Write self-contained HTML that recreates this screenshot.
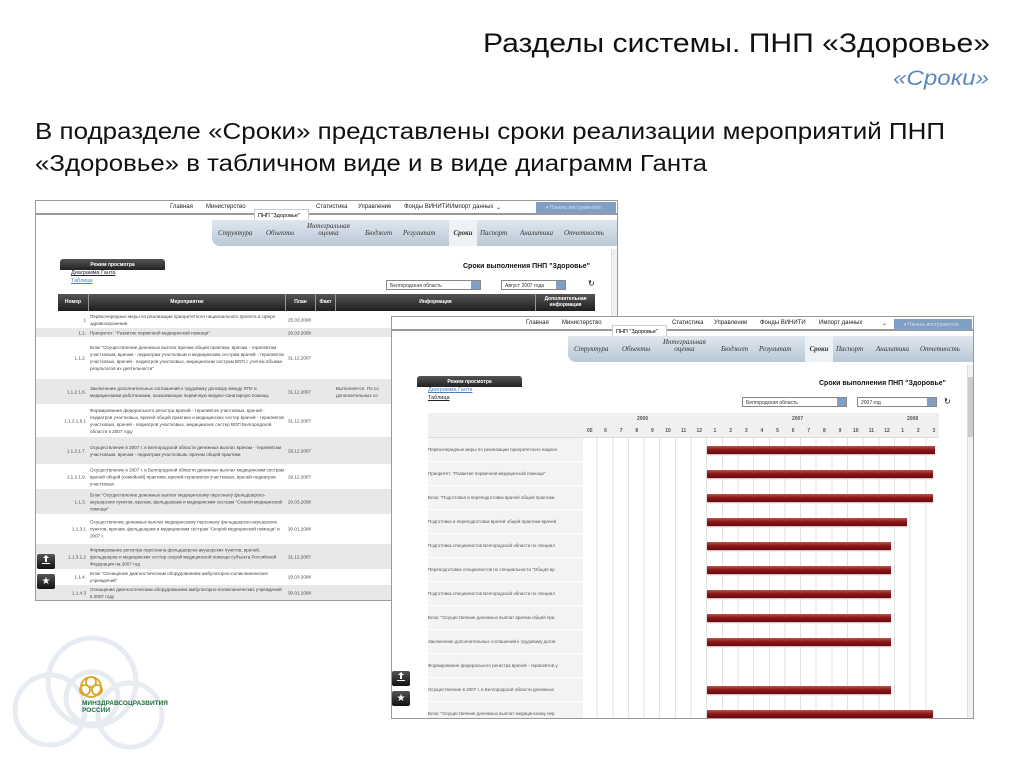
<!DOCTYPE html>
<html><head><meta charset="utf-8"><style>
*{margin:0;padding:0;box-sizing:border-box}
body{width:1024px;height:768px;background:#fff;position:relative;overflow:hidden;font-family:"Liberation Sans","DejaVu Sans",sans-serif}
.a{position:absolute}
.shot{position:absolute;background:#fff;border:1px solid #9a9a9a;overflow:hidden}
.top{position:absolute;left:0;top:0;right:0;height:14px;border-bottom:2px solid #9a9a9a;font-size:6px;color:#222}
.top span{position:absolute;top:3px}
.tabs{position:absolute;height:26px;background:linear-gradient(#dfe7ef,#b9c8d6);border-radius:0 0 0 8px;font-family:"Liberation Serif",serif;font-style:italic;font-size:7px;color:#333}
.tabs span{position:absolute;top:9px}
.panel{position:absolute;height:11px;background:#7f9fc5;color:#dde;font-size:5px;padding:3px 10px}
.pop{position:absolute;background:#fff;border:1px solid #ccc;font-size:5.5px;padding:3px;height:16px}
.btnh{position:absolute;height:11px;background:linear-gradient(#555,#222);border-radius:3px 3px 0 0;color:#fff;font-size:5px;font-weight:bold;text-align:center;padding-top:3px}
.lk{position:absolute;font-size:5.5px;color:#222;text-decoration:underline}
.sel{position:absolute;height:10px;border:1px solid #888;background:#fff;font-size:5px;padding:2px 3px;color:#333}
.sel i{position:absolute;right:0;top:0;width:9px;height:8px;background:#7f9fc5}
.hd{position:absolute;font-size:7px;font-weight:bold;color:#111}
.th{position:absolute;background:linear-gradient(#555,#1e1e1e);color:#fff;font-size:5px;font-weight:bold;text-align:center}
.r{position:absolute;left:0;width:560px;font-size:4.6px;line-height:7px;color:#444}
.r.g{background:#e8e8e8}
.r b{position:absolute;left:0;width:50px;text-align:right;font-weight:normal;top:50%;transform:translateY(-50%)}
.r s{position:absolute;left:54px;width:195px;text-decoration:none;top:50%;transform:translateY(-50%)}
.r u{position:absolute;left:252px;text-decoration:none;top:50%;transform:translateY(-50%)}
.sb{position:absolute;width:7px;background:#f0f0f0;border-left:1px solid #ddd}
.ib{position:absolute;width:18px;height:15px;background:linear-gradient(#555,#111);color:#fff;font-size:10px;text-align:center;line-height:15px;border-radius:2px}
.gr{position:absolute;left:36px;font-size:4.5px;color:#555;height:24px;line-height:24px;width:155px;overflow:hidden;white-space:nowrap;background:#f3f3f3;border-bottom:1px solid #fff}
.bar{position:absolute;height:8px;background:linear-gradient(#c05050,#8a1515 50%,#6a0c0c);box-shadow:0 1px 1px #bbb}
</style></head><body>

<svg class="a" style="left:0;top:0" width="1024" height="190">
<text x="483" y="52" font-family="Liberation Sans,sans-serif" font-size="27" fill="#111" textLength="507" lengthAdjust="spacingAndGlyphs">Разделы системы. ПНП «Здоровье»</text>
<text x="893" y="85" font-family="Liberation Sans,sans-serif" font-style="italic" font-size="21" fill="#5b87c0" textLength="96" lengthAdjust="spacingAndGlyphs">«Сроки»</text>
<text x="35" y="139" font-family="Liberation Sans,sans-serif" font-size="23" fill="#111" textLength="910" lengthAdjust="spacingAndGlyphs">В подразделе «Сроки» представлены сроки реализации мероприятий ПНП</text>
<text x="35" y="171" font-family="Liberation Sans,sans-serif" font-size="23" fill="#111" textLength="672" lengthAdjust="spacingAndGlyphs">«Здоровье» в табличном виде и в виде диаграмм Ганта</text>
</svg>

<!-- logo -->
<svg class="a" style="left:0;top:620px" width="200" height="148">
 <g fill="none" stroke="#e7ecf2" stroke-width="5">
  <circle cx="92" cy="62" r="44"/><circle cx="92" cy="78" r="26"/>
  <circle cx="50" cy="90" r="35"/><circle cx="130" cy="95" r="32"/>
 </g>
 <g fill="none" stroke="#d9a72a" stroke-width="1.8">
  <circle cx="91" cy="62" r="5"/><circle cx="85" cy="70" r="5"/><circle cx="97" cy="70" r="5"/><circle cx="91" cy="67" r="10"/>
 </g>
</svg>
<div class="a" style="left:82px;top:700px;font-size:6.5px;font-weight:bold;color:#1f6e3a;line-height:7px">МИНЗДРАВСОЦРАЗВИТИЯ<br>РОССИИ</div>

<!-- Screenshot 1 -->
<div class="shot" style="left:35px;top:200px;width:583px;height:401px">
 <div class="top"><span style="left:134px">Главная</span><span style="left:170px">Министерство</span><span style="left:280px">Статистика</span><span style="left:322px">Управление</span><span style="left:368px">Фонды ВИНИТИ</span><span style="left:414px">Импорт данных</span><span style="left:460px">⌄</span></div>
 <div class="panel" style="left:500px;top:1px;width:80px">▾ Панель инструментов</div>
 <div class="pop" style="left:218px;top:8px;width:55px">ПНП "Здоровье"</div>
 <div class="tabs" style="left:176px;top:19px;width:407px"><span style="left:6px">Структура</span><span style="left:54px">Объекты</span><span style="left:95px;top:3px;text-align:center;line-height:7px">Интегральная<br>оценка</span><span style="left:153px">Бюджет</span><span style="left:191px">Результат</span><span style="left:237px;font-weight:bold;background:#eef2f5;top:0;height:26px;padding-top:9px;width:28px;text-align:center">Сроки</span><span style="left:268px">Паспорт</span><span style="left:308px">Аналитика</span><span style="left:352px">Отчетность</span></div>
 <div class="btnh" style="left:24px;top:58px;width:105px">Режим просмотра</div>
 <div class="lk" style="left:35px;top:69px">Диаграмма Ганта</div>
 <div class="lk" style="left:35px;top:77px;color:#4a7fc0">Таблица</div>
 <div class="hd" style="left:427px;top:62px">Сроки выполнения ПНП "Здоровье"</div>
 <div class="sel" style="left:350px;top:79px;width:95px">Белгородская область<i></i></div>
 <div class="sel" style="left:465px;top:79px;width:65px">Август 2007 года<i></i></div>
 <div class="a" style="left:552px;top:78px;font-size:8px">↻</div>
 <div class="th" style="left:22px;top:93px;width:30px;height:17px;padding-top:5px">Номер</div>
 <div class="th" style="left:52px;top:93px;width:197px;height:17px;padding-top:5px;border-left:1px solid #999">Мероприятие</div>
 <div class="th" style="left:249px;top:93px;width:30px;height:17px;padding-top:5px;border-left:1px solid #999">План</div>
 <div class="th" style="left:279px;top:93px;width:20px;height:17px;padding-top:5px;border-left:1px solid #999">Факт</div>
 <div class="th" style="left:299px;top:93px;width:200px;height:17px;padding-top:5px;border-left:1px solid #999">Информация</div>
 <div class="th" style="left:499px;top:93px;width:60px;height:17px;padding-top:2px;border-left:1px solid #999">Дополнительная информация</div>
 <div class="a" style="left:0;top:110px">
  <div class="r" style="top:0;height:17px"><b>1</b><s>Первоочередные меры по реализации приоритетного национального проекта в сфере здравоохранения</s><u>25.03.2008</u></div>
  <div class="r g" style="top:17px;height:9px"><b>1.1.</b><s>Приоритет: "Развитие первичной медицинской помощи"</s><u>20.03.2008</u></div>
  <div class="r" style="top:26px;height:42px"><b>1.1.2.</b><s>Блок "Осуществление денежных выплат врачам общей практики, врачам - терапевтам участковым, врачам - педиатрам участковым и медицинским сестрам врачей - терапевтов участковых, врачей - педиатров участковых, медицинским сестрам ВОП с учетом объема результатов их деятельности"</s><u>31.12.2007</u></div>
  <div class="r g" style="top:68px;height:25px"><b>1.1.2.1.6.</b><s>Заключение дополнительных соглашений к трудовому договору между ЛПУ и медицинскими работниками, оказывающих первичную медико-санитарную помощь</s><u>31.12.2007</u><u style="left:300px">Выполняется. По со<br>дополнительных со</u></div>
  <div class="r" style="top:93px;height:33px"><b>1.1.2.1.6.1</b><s>Формирование федерального регистра врачей - терапевтов участковых, врачей - педиатров участковых, врачей общей практики и медицинских сестер врачей - терапевтов участковых, врачей - педиатров участковых, медицинских сестер ВОП Белгородской области в 2007 году</s><u>31.12.2007</u></div>
  <div class="r g" style="top:126px;height:27px"><b>1.1.2.1.7.</b><s>Осуществление в 2007 г. в Белгородской области денежных выплат врачам - терапевтам участковым, врачам - педиатрам участковым, врачам общей практики</s><u>29.12.2007</u></div>
  <div class="r" style="top:153px;height:25px"><b>1.1.2.1.9.</b><s>Осуществление в 2007 г. в Белгородской области денежных выплат медицинским сестрам врачей общей (семейной) практики, врачей-терапевтов участковых, врачей-педиатров участковых</s><u>29.12.2007</u></div>
  <div class="r g" style="top:178px;height:25px"><b>1.1.3.</b><s>Блок "Осуществление денежных выплат медицинскому персоналу фельдшерско-акушерских пунктов, врачам, фельдшерам и медицинским сестрам "Скорой медицинской помощи"</s><u>20.03.2008</u></div>
  <div class="r" style="top:203px;height:30px"><b>1.1.3.1</b><s>Осуществление денежных выплат медицинскому персоналу фельдшерско-акушерских пунктов, врачам, фельдшерам и медицинским сестрам "Скорой медицинской помощи" в 2007 г.</s><u>30.01.2008</u></div>
  <div class="r g" style="top:233px;height:25px"><b>1.1.3.1.2</b><s>Формирование регистра персонала фельдшерско-акушерских пунктов, врачей, фельдшеров и медицинских сестер скорой медицинской помощи субъекта Российской Федерации на 2007 год</s><u>31.12.2007</u></div>
  <div class="r" style="top:258px;height:16px"><b>1.1.4.</b><s>Блок "Оснащение диагностическим оборудованием амбулаторно-поликлинических учреждений"</s><u>20.03.2008</u></div>
  <div class="r g" style="top:274px;height:16px"><b>1.1.4.3</b><s>Оснащение диагностическим оборудованием амбулаторно-поликлинических учреждений в 2007 году</s><u>30.01.2008</u></div>
 </div>
 <div class="sb" style="left:575px;top:48px;height:353px"></div>
 <div class="ib" style="left:1px;top:353px"><svg width="10" height="11" viewBox="0 0 10 11"><path d="M5 1L2 4h2v4h2V4h2z M1 9h8v1H1z" fill="#fff"/></svg></div>
 <div class="ib" style="left:1px;top:373px">★</div>
</div>

<!-- Screenshot 2 -->
<div class="shot" style="left:391px;top:316px;width:583px;height:403px">
 <div class="top"><span style="left:134px">Главная</span><span style="left:170px">Министерство</span><span style="left:280px">Статистика</span><span style="left:322px">Управление</span><span style="left:368px">Фонды ВИНИТИ</span><span style="left:427px">Импорт данных</span><span style="left:490px">⌄</span></div>
 <div class="panel" style="left:502px;top:2px;width:78px">▾ Панель инструментов</div>
 <div class="pop" style="left:220px;top:8px;width:55px">ПНП "Здоровье"</div>
 <div class="tabs" style="left:176px;top:19px;width:407px"><span style="left:6px">Структура</span><span style="left:54px">Объекты</span><span style="left:95px;top:3px;text-align:center;line-height:7px">Интегральная<br>оценка</span><span style="left:153px">Бюджет</span><span style="left:191px">Результат</span><span style="left:237px;font-weight:bold;background:#eef2f5;top:0;height:26px;padding-top:9px;width:28px;text-align:center">Сроки</span><span style="left:268px">Паспорт</span><span style="left:308px">Аналитика</span><span style="left:352px">Отчетность</span></div>
 <div class="btnh" style="left:25px;top:59px;width:105px">Режим просмотра</div>
 <div class="lk" style="left:36px;top:70px;color:#4a7fc0">Диаграмма Ганта</div>
 <div class="lk" style="left:36px;top:78px">Таблица</div>
 <div class="hd" style="left:427px;top:63px">Сроки выполнения ПНП "Здоровье"</div>
 <div class="sel" style="left:350px;top:80px;width:105px">Белгородская область<i></i></div>
 <div class="sel" style="left:465px;top:80px;width:80px">2007 год<i></i></div>
 <div class="a" style="left:552px;top:80px;font-size:8px">↻</div>
 <div class="a" style="left:36px;top:96px;width:511px;height:307px;background:repeating-linear-gradient(90deg,#fff 0,#fff 14.65px,#e2e2e2 14.65px,#e2e2e2 15.65px);background-position:154px 0;background-repeat:repeat-y"></div>
 <div class="a" style="left:36px;top:96px;width:511px;height:25px;background:#f0f0f0;border-bottom:1px solid #ddd"></div>
 <div class="a" style="top:99px;left:245px;font-size:5px;font-weight:bold;color:#555">2006</div>
 <div class="a" style="top:99px;left:400px;font-size:5px;font-weight:bold;color:#555">2007</div>
 <div class="a" style="top:99px;left:515px;font-size:5px;font-weight:bold;color:#555">2008</div>
 <div class="a" style="top:111px;left:190px;font-size:5px;font-weight:bold;color:#555;white-space:nowrap;display:flex">
  <span style="width:15.65px;text-align:center">05</span><span style="width:15.65px;text-align:center">6</span><span style="width:15.65px;text-align:center">7</span><span style="width:15.65px;text-align:center">8</span><span style="width:15.65px;text-align:center">9</span><span style="width:15.65px;text-align:center">10</span><span style="width:15.65px;text-align:center">11</span><span style="width:15.65px;text-align:center">12</span><span style="width:15.65px;text-align:center">1</span><span style="width:15.65px;text-align:center">2</span><span style="width:15.65px;text-align:center">3</span><span style="width:15.65px;text-align:center">4</span><span style="width:15.65px;text-align:center">5</span><span style="width:15.65px;text-align:center">6</span><span style="width:15.65px;text-align:center">7</span><span style="width:15.65px;text-align:center">8</span><span style="width:15.65px;text-align:center">9</span><span style="width:15.65px;text-align:center">10</span><span style="width:15.65px;text-align:center">11</span><span style="width:15.65px;text-align:center">12</span><span style="width:15.65px;text-align:center">1</span><span style="width:15.65px;text-align:center">2</span><span style="width:15.65px;text-align:center">3</span>
 </div>
 <div class="gr" style="top:121px">Первоочередные меры по реализации приоритетного национ</div>
 <div class="gr" style="top:145px">Приоритет: "Развитие первичной медицинской помощи"</div>
 <div class="gr" style="top:169px">Блок: "Подготовка и переподготовка врачей общей практики</div>
 <div class="gr" style="top:193px">Подготовка и переподготовка врачей общей практики врачей</div>
 <div class="gr" style="top:217px">Подготовка специалистов Белгородской области по специал</div>
 <div class="gr" style="top:241px">Переподготовка специалистов по специальности "Общая вр</div>
 <div class="gr" style="top:265px">Подготовка специалистов Белгородской области по специал</div>
 <div class="gr" style="top:289px">Блок: "Осуществление денежных выплат врачам общей пра</div>
 <div class="gr" style="top:313px">Заключение дополнительных соглашений к трудовому догов</div>
 <div class="gr" style="top:337px">Формирование федерального регистра врачей - терапевтов у</div>
 <div class="gr" style="top:361px">Осуществление в 2007 г. в Белгородской области денежных</div>
 <div class="gr" style="top:385px">Блок: "Осуществление денежных выплат медицинскому пер</div>
 <div class="bar" style="left:315px;top:129px;width:228px"></div>
 <div class="bar" style="left:315px;top:153px;width:226px"></div>
 <div class="bar" style="left:315px;top:177px;width:226px"></div>
 <div class="bar" style="left:315px;top:201px;width:200px"></div>
 <div class="bar" style="left:315px;top:225px;width:184px"></div>
 <div class="bar" style="left:315px;top:249px;width:184px"></div>
 <div class="bar" style="left:315px;top:273px;width:184px"></div>
 <div class="bar" style="left:315px;top:297px;width:184px"></div>
 <div class="bar" style="left:315px;top:321px;width:184px"></div>
 <div class="bar" style="left:315px;top:369px;width:184px"></div>
 <div class="bar" style="left:315px;top:393px;width:226px"></div>
 <div class="sb" style="left:575px;top:48px;height:355px"><div style="margin-top:12px;height:60px;background:#ccc"></div></div>
 <div class="ib" style="left:0;top:354px"><svg width="10" height="11" viewBox="0 0 10 11"><path d="M5 1L2 4h2v4h2V4h2z M1 9h8v1H1z" fill="#fff"/></svg></div>
 <div class="ib" style="left:0;top:374px">★</div>
</div>
</body></html>
